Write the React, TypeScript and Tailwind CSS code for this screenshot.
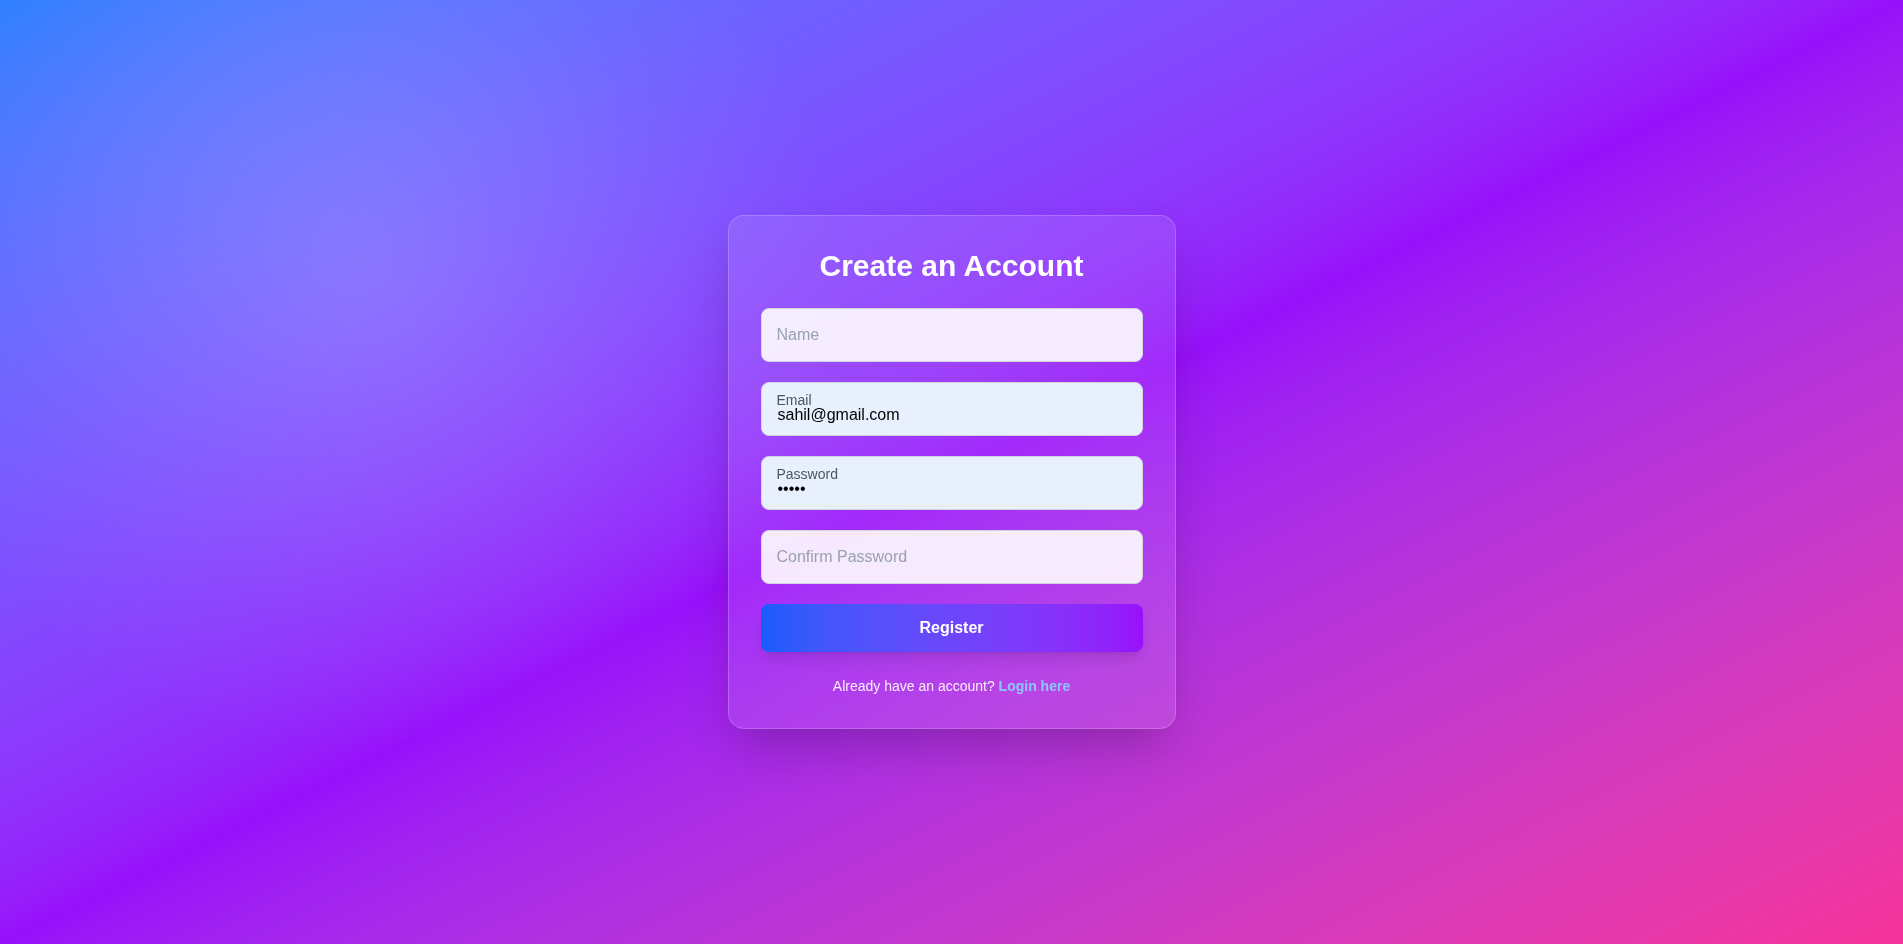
import { useState } from 'react';

interface FieldProps {
  label: string;
  type?: string;
  value?: string;
}

const Field = ({ label, type = 'text', value }: FieldProps) => {
  const filled = !!value;
  return (
    <div className="relative mb-5">
      <input
        type={type}
        defaultValue={value}
        className={`w-full rounded-lg border border-gray-300 px-4 pt-5 pb-2 text-base leading-6 text-black outline-none
                  ${filled ? 'bg-[#e8f0fe]' : 'bg-white/90'}`}
      />
      {filled ? (
        <label className="pointer-events-none absolute left-4 top-2 text-sm leading-5 text-gray-600">
          {label}
        </label>
      ) : (
        <label className="pointer-events-none absolute left-4 top-1/2 -translate-y-1/2 text-base leading-6 text-gray-400">
          {label}
        </label>
      )}
    </div>
  );
};

export default function App() {
  const [submitted, setSubmitted] = useState(false);

  return (
    <div className="relative flex min-h-screen items-center justify-center overflow-hidden bg-gradient-to-br from-blue-500 via-purple-600 to-pink-500 font-['Liberation_Sans',Arial,sans-serif]">
      {/* soft light spot, upper left */}
      <div className="pointer-events-none absolute inset-0 bg-[radial-gradient(circle_at_360px_270px,rgba(255,255,255,0.17)_0px,rgba(255,255,255,0.09)_200px,rgba(255,255,255,0.03)_360px,transparent_480px)]" />

      <div className="relative w-full max-w-md rounded-2xl border border-white/20 bg-white/10 p-8 shadow-2xl backdrop-blur-lg">
        <h2 className="mb-6 text-center text-3xl font-bold text-white">Create an Account</h2>

        <form
          onSubmit={(e) => {
            e.preventDefault();
            setSubmitted(!submitted);
          }}
        >
          <Field label="Name" />
          <Field label="Email" type="email" value="sahil@gmail.com" />
          <Field label="Password" type="password" value="12345" />
          <Field label="Confirm Password" type="password" />

          <button
            type="submit"
            className="w-full cursor-pointer rounded-lg bg-gradient-to-r from-blue-600 to-purple-600 py-3 text-base leading-6 font-bold text-white shadow-lg"
          >
            Register
          </button>
        </form>

        <p className="mt-6 text-center text-sm leading-5 text-white/90">
          Already have an account?{' '}
          <a href="#" className="font-bold text-blue-300">
            Login here
          </a>
        </p>
      </div>
    </div>
  );
}
